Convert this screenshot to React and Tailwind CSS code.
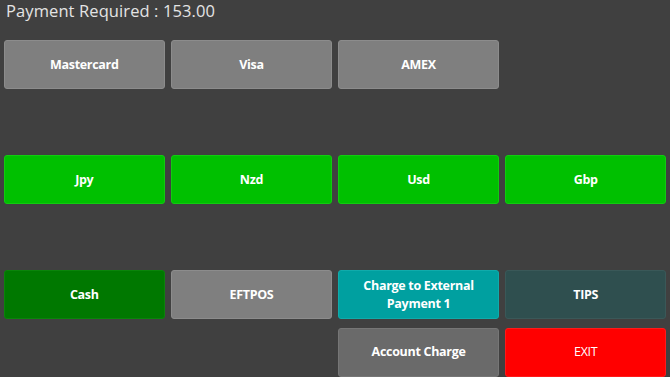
import React from 'react';

const styles = {
  gray: 'bg-[#7f7f7f] border-[#8c8c8c] font-bold',
  green: 'bg-[#00c000] border-[#10cc10] font-bold',
  dark: 'bg-[#007800] border-[#0a840a] font-bold',
  teal: 'bg-[#00a0a0] border-[#10abab] font-bold',
  slate: 'bg-[#2f4f4f] border-[#3a5858] font-bold',
  account: 'bg-[#6a6a6a] border-[#767676] font-bold',
  exit: 'bg-[#ff0000] border-[#ff1a1a] font-normal',
};

const rows = [
  [['Mastercard', 'gray'], ['Visa', 'gray'], ['AMEX', 'gray'], null],
  [null, null, null, null],
  [['Jpy', 'green'], ['Nzd', 'green'], ['Usd', 'green'], ['Gbp', 'green']],
  [null, null, null, null],
  [['Cash', 'dark'], ['EFTPOS', 'gray'], ['Charge to External Payment 1', 'teal'], ['TIPS', 'slate']],
  [null, null, ['Account Charge', 'account'], ['EXIT', 'exit']],
];

const App = () => {
  return (
    <div className="w-[670px] h-[377px] overflow-hidden bg-[#404040] font-['Open_Sans',sans-serif]">
      <div className="h-[40px] pl-[6px]">
        <div className="text-[16.5px] leading-[22px] tracking-[0.1px] text-[#e4e4e4]">Payment Required : 153.00</div>
      </div>
      <div className="grid grid-cols-4 auto-rows-[49px] gap-x-[6.5px] gap-y-[8.5px] px-[4px]">
        {rows.flat().map((cell, i) =>
          cell ? (
            <button
              key={i}
              className={`flex items-center justify-center rounded-[3px] border text-white text-[12.5px] leading-[18px] tracking-[-0.3px] px-3 text-center ${styles[cell[1]]}`}
            >
              {cell[0]}
            </button>
          ) : (
            <div key={i} />
          )
        )}
      </div>
    </div>
  );
};

export default App;
